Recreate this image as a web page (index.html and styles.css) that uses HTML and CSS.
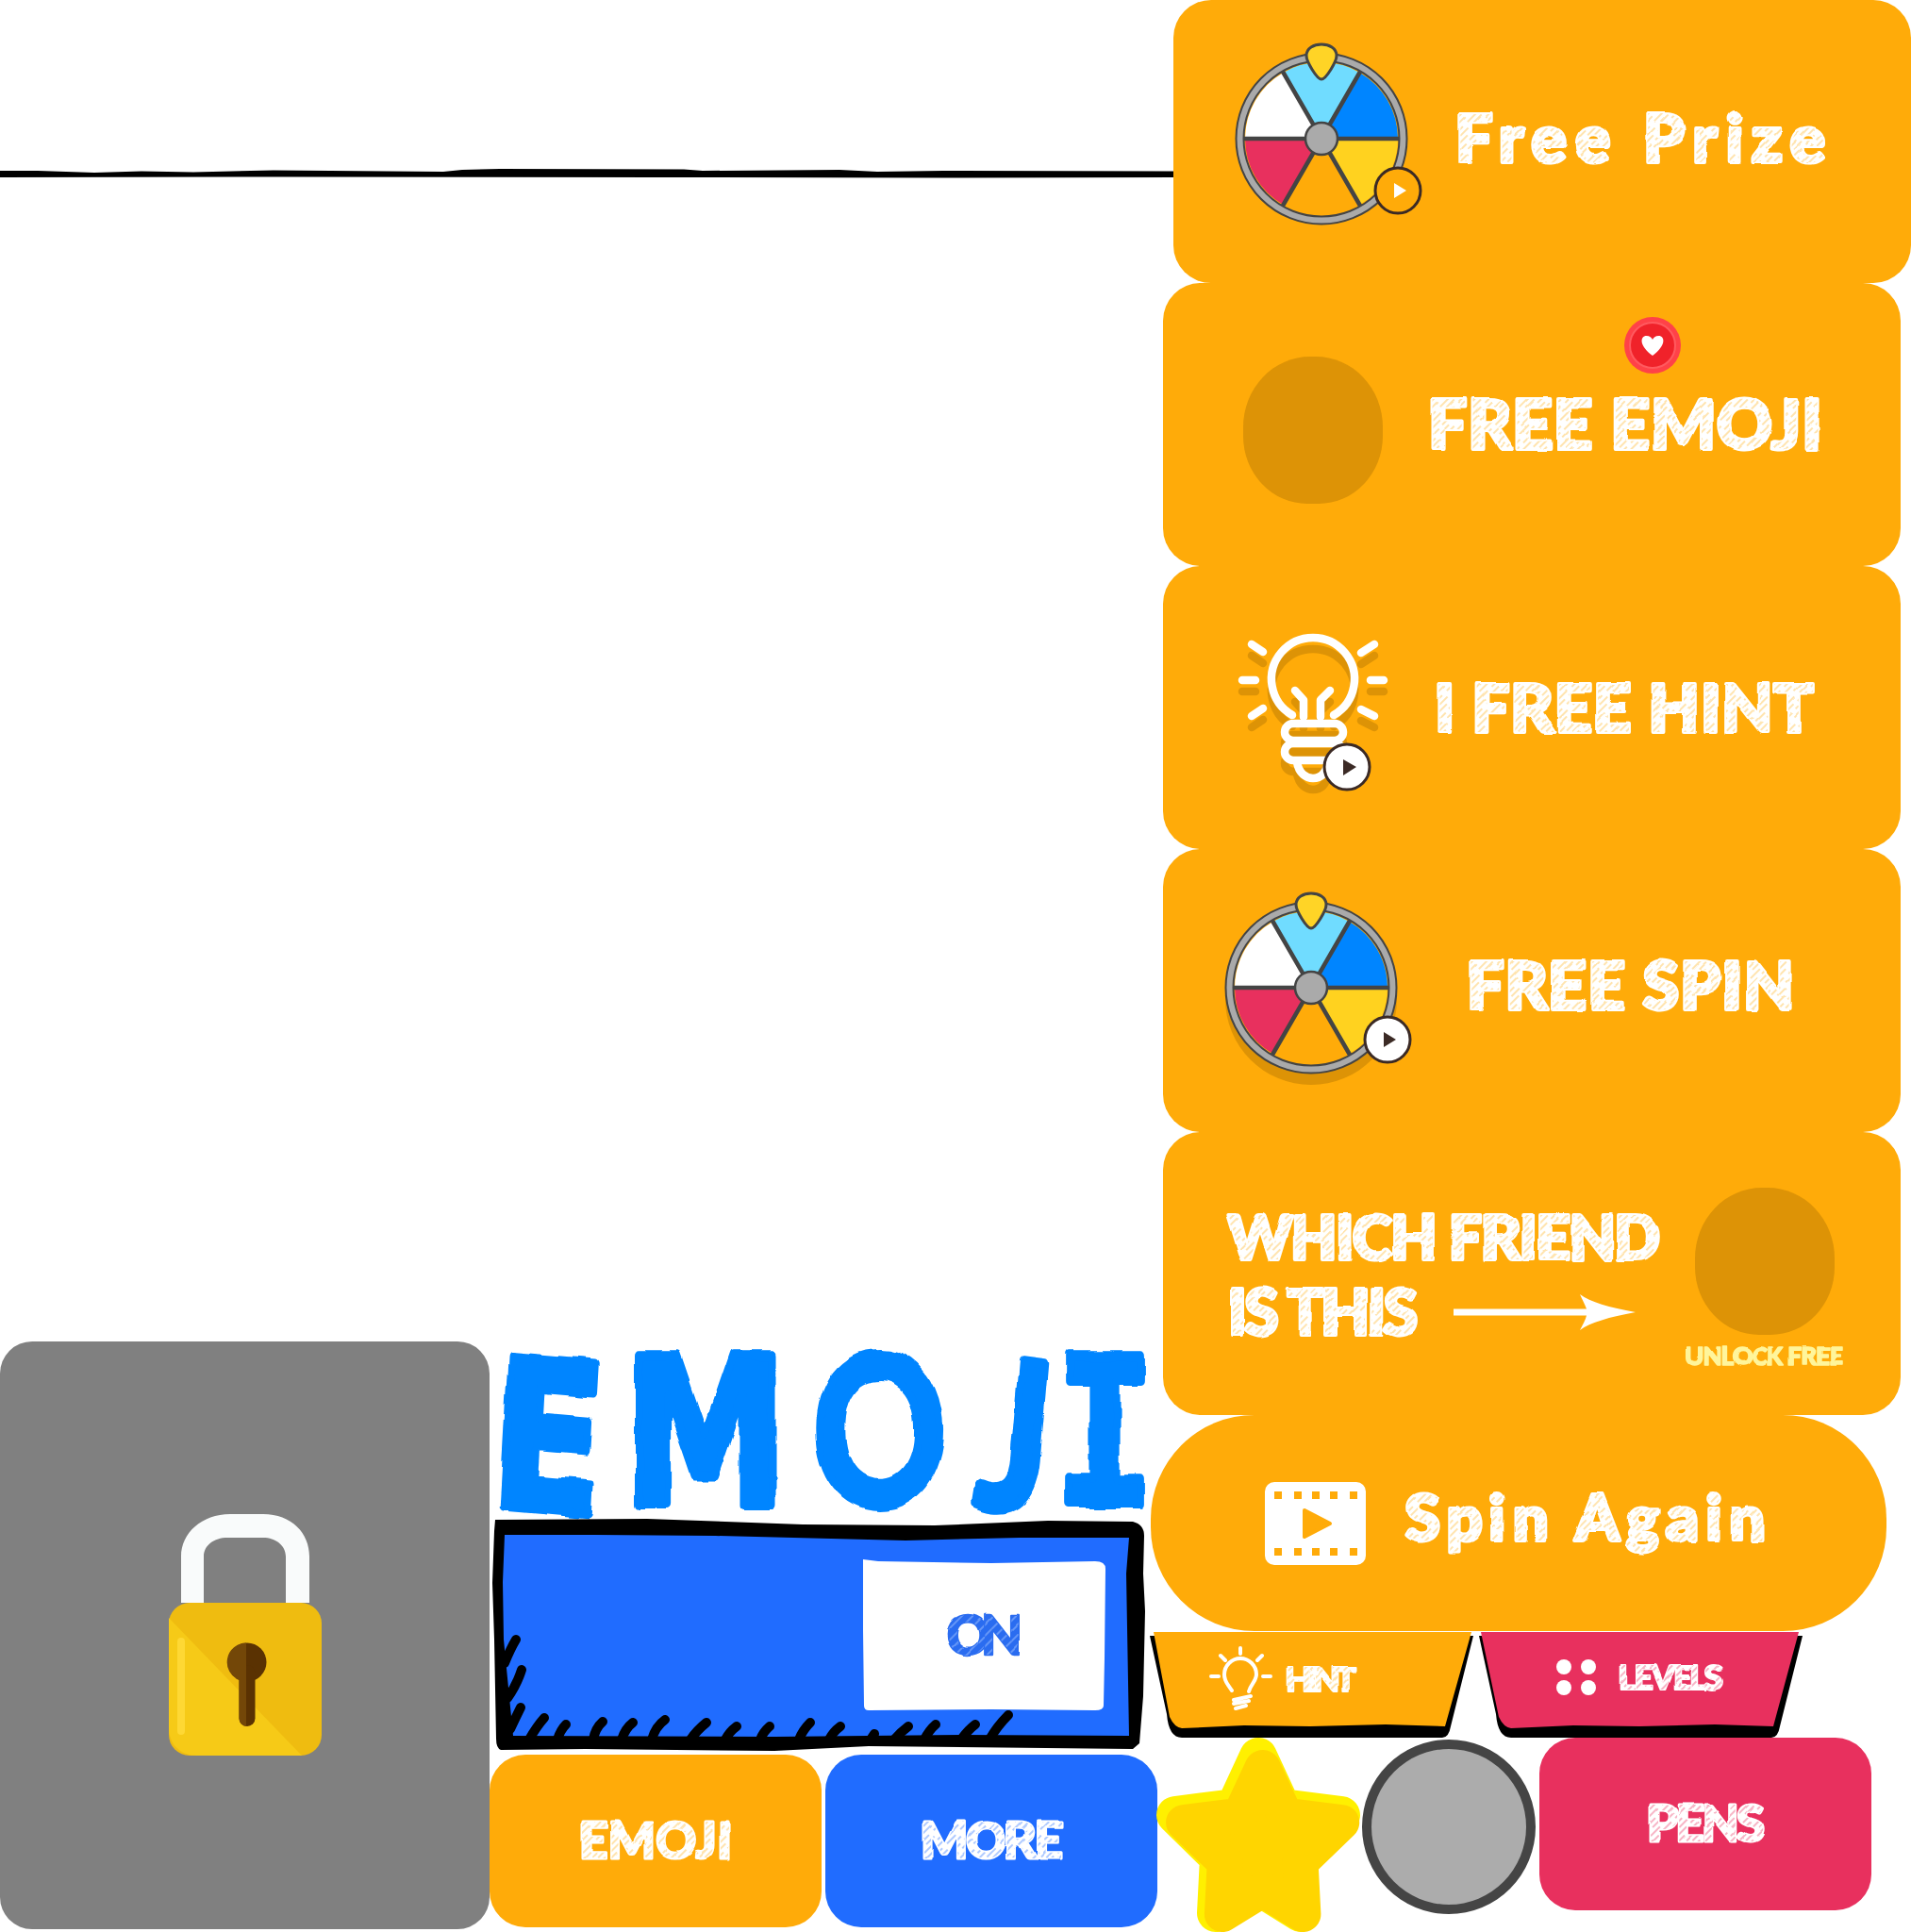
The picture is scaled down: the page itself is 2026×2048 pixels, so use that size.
FILE: index.html
```html
<!DOCTYPE html>
<html lang="en">
<head>
<meta charset="utf-8">
<title>Emoji game sprite sheet</title>
<link rel="stylesheet" href="styles.css">
</head>
<body>
<svg class="defs" width="0" height="0" aria-hidden="true">
  <defs>
    <filter id="wobble" x="-5%" y="-15%" width="110%" height="130%">
      <feTurbulence type="fractalNoise" baseFrequency=".035" numOctaves="2" seed="4"/>
      <feDisplacementMap in="SourceGraphic" scale="3.500" xChannelSelector="R" yChannelSelector="G"/>
    </filter>
    <filter id="wobble-big" x="-5%" y="-10%" width="110%" height="120%">
      <feTurbulence type="fractalNoise" baseFrequency=".022" numOctaves="2" seed="9"/>
      <feDisplacementMap in="SourceGraphic" scale="11" xChannelSelector="R" yChannelSelector="G"/>
    </filter>
    <pattern id="h-orange" width="20" height="20" patternUnits="userSpaceOnUse" patternTransform="rotate(45)">
      <rect width="20" height="20" fill="#fff"/>
      <path d="M2 0V12M7 6V20M12 0V8M12 14V20M17 3V16" stroke="#ffab09" stroke-opacity=".5" stroke-width="1.300"/>
    </pattern>
    <pattern id="h-blue" width="20" height="20" patternUnits="userSpaceOnUse" patternTransform="rotate(45)">
      <rect width="20" height="20" fill="#fff"/>
      <path d="M2 0V12M7 6V20M12 0V8M12 14V20M17 3V16" stroke="#206cff" stroke-opacity=".55" stroke-width="1.300"/>
    </pattern>
    <pattern id="h-red" width="20" height="20" patternUnits="userSpaceOnUse" patternTransform="rotate(45)">
      <rect width="20" height="20" fill="#fff"/>
      <path d="M2 0V12M7 6V20M12 0V8M12 14V20M17 3V16" stroke="#e8305e" stroke-opacity=".55" stroke-width="1.300"/>
    </pattern>
    <pattern id="h-on" width="8" height="8" patternUnits="userSpaceOnUse" patternTransform="rotate(45)">
      <rect width="8" height="8" fill="#2a6cf0"/>
      <path d="M3 0V8" stroke="#9fc0ff" stroke-width="1"/>
    </pattern>
    <symbol id="wheel" viewBox="-105 -105 210 210">
      <circle r="82" fill="#ffab09"/>
      <path d="M0 0L-40.500-70.100A81 81 0 0 1 40.500-70.100Z" fill="#70dcff"/>
      <path d="M0 0L40.500-70.100A81 81 0 0 1 81 0Z" fill="#0085ff"/>
      <path d="M0 0L81 0A81 81 0 0 1 40.500 70.100Z" fill="#ffd21f"/>
      <path d="M0 0L-40.500 70.100A81 81 0 0 1-81 0Z" fill="#e8305e"/>
      <path d="M0 0L-81 0A81 81 0 0 1-40.500-70.100Z" fill="#fff"/>
      <path d="M-82 0H82M-41-71L41 71M41-71L-41 71" stroke="#444" stroke-width="4.500"/>
      <circle r="86.500" fill="none" stroke="#444" stroke-width="10"/>
      <circle r="86.500" fill="none" stroke="#aaa" stroke-width="6"/>
      <circle r="17" fill="#aaa" stroke="#444" stroke-width="2.500"/>
      <path d="M0-63C-5-63-16-82-16-88C-16-96-8-100 0-100C8-100 16-96 16-88C16-82 5-63 0-63Z" fill="#ffd426" stroke="#444" stroke-width="3"/>
    </symbol>
    <polygon id="star-shape" points="107,20 132,74 195,82 149,127 152,186 107,158 62,186 65,127 19,82 82,74"/>
  </defs>
</svg>

<main class="atlas">
  <svg class="rule" width="1244" height="12" viewBox="0 0 1244 12">
    <path d="M0 3L40 3 100 5 150 3.500 205 4.500 290 2.500 470 4 490 2 530 1 725 1.500 745 3 890 2 930 4 1000 3 1244 3.500V10L1000 10.500 700 10 300 9.500 0 10Z"/>
  </svg>

  <section class="panel panel-prize">
    <svg class="wheel" width="210" height="210" viewBox="-105 -105 210 210">
      <use href="#wheel" x="-105" y="-105" width="210" height="210"/>
      <circle cx="81" cy="55" r="24" fill="#ffab09" stroke="#3b2a25" stroke-width="3"/>
      <path d="M77 47V63L90 55Z" fill="#fff"/>
    </svg>
    <svg class="label gap-prize" width="396" height="54"><text class="fs-70" x="2" y="52" textLength="392" filter="url(#wobble)" fill="url(#h-orange)">Free Prize</text></svg>
  </section>

  <section class="panel panel-emoji">
    <div class="blob blob-emoji"></div>
    <svg class="label gap-emoji" width="422" height="56"><text class="fs-73" x="2" y="54" textLength="418" filter="url(#wobble)" fill="url(#h-orange)">FREE EMOJI</text></svg>
    <svg class="heart" width="60" height="60" viewBox="-30 -30 60 60">
      <circle r="30" fill="#ff4248"/>
      <circle r="24" fill="#f0222a"/>
      <circle r="24" fill="none" stroke="#ff5a5f" stroke-width="2"/>
      <path d="M0 11C-15 0-13-10-6.500-10C-3-10-1-8 0-6C1-8 3-10 6.500-10C13-10 15 0 0 11Z" fill="#fff"/>
    </svg>
  </section>

  <section class="panel panel-hint">
    <svg class="bulb" width="200" height="200" viewBox="0 0 200 200">
      <g id="bulb-lines" class="bulb-strokes">
        <path d="M80 98A44 44 0 1 1 124 98"/>
        <path d="M83 72L92 82V100M120 72L110 82V100"/>
        <rect x="72" y="107" width="62" height="18" rx="9"/>
        <rect x="72" y="128" width="62" height="18" rx="9"/>
        <path d="M85 148C87 160 95 165 102 165C110 165 116 160 118 148"/>
        <path d="M37 23L49 31M27 61H41M37 99L49 91M153 32L167 23M163 61H177M153 92L167 99"/>
      </g>
      <use href="#bulb-lines" y="12" class="bulb-shadow"/>
      <use href="#bulb-lines" class="bulb-top"/>
      <circle cx="138" cy="153" r="24" fill="#fff" stroke="#3b2a25" stroke-width="3"/>
      <path d="M134 145V162L148 153Z" fill="#3b2a25"/>
    </svg>
    <svg class="label gap-hint" width="406" height="55"><text class="fs-71" x="2" y="53" textLength="402" filter="url(#wobble)" fill="url(#h-orange)">I FREE HINT</text></svg>
  </section>

  <section class="panel panel-spin">
    <svg class="wheel" width="210" height="210" viewBox="-105 -105 210 210">
      <circle cy="12" r="91" fill="#dd9306"/>
      <use href="#wheel" x="-105" y="-105" width="210" height="210"/>
      <circle cx="81" cy="55" r="24" fill="#fff" stroke="#3b2a25" stroke-width="3"/>
      <path d="M77 47V63L90 55Z" fill="#3b2a25"/>
    </svg>
    <svg class="label gap-spin" width="351" height="54"><text class="fs-70" x="2" y="52" textLength="347" filter="url(#wobble)" fill="url(#h-orange)">FREE SPIN</text></svg>
  </section>

  <section class="panel panel-friend">
    <div class="friend-copy">
      <svg class="label" width="462" height="50"><text class="fs-64" x="2" y="48" textLength="458" filter="url(#wobble)" fill="url(#h-orange)">WHICH FRIEND</text></svg>
      <div class="friend-row">
        <svg class="label" width="205" height="51"><text class="fs-66" x="2" y="49" textLength="201" filter="url(#wobble)" fill="url(#h-orange)">IS THIS</text></svg>
        <svg width="193" height="38" viewBox="0 0 193 38"><path fill="#fff" d="M0 15.500H141C139 10 136 5 134 0C145 8 165 14 193 19C165 24 145 30 134 38C137 32 140 27 141 22.500H0Z"/></svg>
      </div>
    </div>
    <div class="friend-unlock">
      <div class="blob"></div>
      <svg class="label label-unlock" width="169" height="20"><text class="fs-26" x="1" y="19" textLength="167" filter="url(#wobble)" fill="#fff59b">UNLOCK FREE</text></svg>
    </div>
  </section>

  <section class="panel-again">
    <svg width="107" height="88" viewBox="0 0 107 88">
      <rect width="107" height="88" rx="10" fill="#fff"/>
      <path d="M10 10h8v8h-8zM31 10h8v8h-8zM50 10h8v8h-8zM69 10h8v8h-8zM90 10h8v8h-8zM10 70h8v8h-8zM31 70h8v8h-8zM50 70h8v8h-8zM69 70h8v8h-8zM90 70h8v8h-8z" fill="#ffab09"/>
      <path d="M42 30L69 44 42 58Z" fill="#ffab09" stroke="#ffab09" stroke-width="4" stroke-linejoin="round"/>
    </svg>
    <svg class="label gap-again" width="385" height="52"><text class="fs-67" x="2" y="50" textLength="381" filter="url(#wobble)" fill="url(#h-orange)">Spin Again</text></svg>
  </section>

  <section class="tab tab-hint">
    <svg class="tab-shape" width="344" height="112" viewBox="0 0 344 112">
      <path d="M0 4L18 87Q20 112 34 112H310Q317 112 319 100L343 4Z" fill="#000"/>
      <path d="M4 0H341L313 100 250 98 170 100 100 99 34 102Q26 101 21 90Z" fill="#ffab09"/>
    </svg>
    <svg class="mini-bulb" width="64" height="70" viewBox="0 0 64 70">
      <path d="M23 47C18 40 15 36 15 30A17 17 0 0 1 49 30C49 37 43 40 41 48M25 57L43 53M25 61L41 58M27 66L38 63M32 2V8M11 10L16 15M55 10L50 15M1 32H9M56 32H64"/>
    </svg>
    <svg class="label label-sm" width="76" height="28"><text class="fs-36" x="1" y="27" textLength="74" filter="url(#wobble)" fill="url(#h-orange)">HINT</text></svg>
  </section>

  <section class="tab tab-levels">
    <svg class="tab-shape" width="344" height="112" viewBox="0 0 344 112">
      <path d="M0 4L18 87Q20 112 34 112H310Q317 112 319 100L343 4Z" fill="#000"/>
      <path d="M2 0H339L312 100 250 98 170 100 100 99 34 102Q26 101 21 90Z" fill="#e8305e"/>
    </svg>
    <svg width="42" height="38" viewBox="0 0 42 38">
      <circle cx="8" cy="8" r="8" fill="#fff"/>
      <circle cx="34" cy="8" r="8" fill="#fff"/>
      <circle cx="8" cy="30" r="8" fill="#fff"/>
      <circle cx="34" cy="30" r="8" fill="#fff"/>
    </svg>
    <svg class="label label-sm" width="113" height="28"><text class="fs-36" x="1" y="27" textLength="111" filter="url(#wobble)" fill="url(#h-red)">LEVELS</text></svg>
  </section>

  <section class="lock-card">
    <svg width="162" height="256" viewBox="0 0 162 256">
      <path d="M13 94V45C13 20 35 0 65 0H100C130 0 149 20 149 45V94H124V45C124 33 113 25 100 25H62C48 25 37 33 37 45V94Z" fill="#f9fbfb"/>
      <rect y="94" width="162" height="162" rx="22" fill="#efbc10"/>
      <path d="M0 110L141 256H30C12 256 0 244 0 226Z" fill="#f6ca17"/>
      <rect x="9" y="131" width="8" height="103" rx="4" fill="#fed834"/>
      <circle cx="83" cy="157" r="20.500" fill="#5a3202"/>
      <rect x="74.500" y="160" width="17" height="65" rx="8.500" fill="#5a3202"/>
      <path d="M82 136.500A20.500 20.500 0 0 0 74.500 176V216.500A8.500 8.500 0 0 0 82 225Z" fill="#734708"/>
    </svg>
  </section>

  <svg class="title" width="700" height="190" viewBox="0 0 700 190">
    <text class="title-text" y="170" x="-9 170 421 634 742" rotate="4 0 0 6 0" transform="scale(.8 1)" filter="url(#wobble-big)"><tspan class="title-wide">EM</tspan>OJ<tspan class="title-i">I</tspan></text>
  </svg>

  <svg class="toggle" width="696" height="252" viewBox="0 0 696 252">
    <path d="M4 3L165 2 330 8 470 9 590 4 680 5Q692 8 692 20L691 60 693 100 691 190 687 240 680 246 400 243 300 248 100 246 10 247Q5 245 5 235L3 130 1 70 3 15Z" fill="#000"/>
    <path d="M14 19L110 19 237 20 439 25 560 22 676 22 673 60 676 232 500 231 300 233 23 232 13 130 12 69Z" fill="#206cff"/>
    <path d="M394 45L410 47 530 49 640 47Q651 47 651 55L650 150 649 200Q649 205 640 205L530 204 400 205Q395 205 395 200L394 120Z" fill="#fff"/>
    <path class="toggle-hatch" d="M40 236Q48 222 56 213M70 236Q73 226 79 220M108 236Q110 224 118 217M138 236Q142 224 150 218M170 236Q174 222 184 215M211 236Q218 226 228 218M248 236Q252 228 260 222M285 236Q288 228 295 222M326 236Q330 226 338 218M358 236Q362 228 370 222M402 236L406 230M427 236Q434 228 442 222M459 236Q464 226 471 220M498 236Q505 226 513 220M528 236Q536 222 548 210"/>
    <path class="toggle-hatch" d="M14 155Q20 140 26 130M17 192Q27 178 32 162M20 225Q26 212 31 202"/>
    <text class="fs-57 on" x="482" y="146" textLength="81" filter="url(#wobble)" fill="url(#h-on)">ON</text>
  </svg>

  <button class="btn btn-emoji"><svg class="label label-md" width="164" height="41"><text class="fs-53" x="1" y="39" textLength="162" filter="url(#wobble)" fill="url(#h-orange)">EMOJI</text></svg></button>
  <button class="btn btn-more"><svg class="label label-md" width="153" height="41"><text class="fs-53" x="1" y="39" textLength="151" filter="url(#wobble)" fill="url(#h-blue)">MORE</text></svg></button>

  <svg class="star" width="215" height="206" viewBox="0 0 215 206">
    <use href="#star-shape" class="star-back"/>
    <use href="#star-shape" class="star-front" transform="translate(10 13) scale(.95 .937)"/>
  </svg>

  <div class="dial"></div>

  <button class="btn btn-pens"><svg class="label label-md" width="127" height="41"><text class="fs-53" x="1" y="39" textLength="125" filter="url(#wobble)" fill="url(#h-red)">PENS</text></svg></button>
</main>
</body>
</html>
```
FILE: styles.css
```css
* { box-sizing: border-box; }
html, body { margin: 0; padding: 0; background: #fff; }
.defs { position: absolute; }

/* The page is a sprite atlas: each sprite's place on the canvas is its content. */
.atlas {
  position: relative;
  width: 2026px;
  height: 2048px;
  overflow: hidden;
  font-family: "Lato", "Open Sans", sans-serif;
  font-weight: 900;
}

svg { display: block; flex: none; overflow: visible; }

.label text {
  stroke: #fff;
  stroke-width: 4;
  stroke-linejoin: round;
  paint-order: stroke;
}
.label-md text { stroke-width: 3; }
.label-sm text { stroke-width: 2; }
.label-unlock text { stroke: #fff59b; stroke-width: 1.5; }

.fs-73 { font-size: 73px; }
.fs-71 { font-size: 71px; }
.fs-70 { font-size: 70px; }
.fs-67 { font-size: 67px; }
.fs-66 { font-size: 66px; }
.fs-64 { font-size: 64px; }
.fs-57 { font-size: 57px; }
.fs-53 { font-size: 53px; }
.fs-36 { font-size: 36px; }
.fs-26 { font-size: 26px; }

.rule { position: absolute; left: 0; top: 178px; }

/* Orange cards */
.panel {
  position: absolute;
  display: flex;
  align-items: center;
  width: 782px;
  height: 300px;
  background: #ffab09;
  border-radius: 40px;
}
.panel-prize { left: 1244px; top: 0; padding: 0 0 6px 52px; }
.panel-emoji { left: 1233px; top: 300px; padding-left: 85px; }
.panel-hint { left: 1233px; top: 600px; padding-left: 57px; }
.panel-spin { left: 1233px; top: 900px; padding-left: 52px; }
.panel-friend { left: 1233px; top: 1200px; padding-left: 67px; }

.gap-prize { margin-left: 35px; }
.gap-emoji { margin-left: 46px; }
.gap-hint { margin-left: 29px; }
.gap-spin { margin: 0 0 10px 58px; }
.gap-again { margin: 0 0 12px 40px; }

.panel-emoji .blob { margin-top: 12px; }
.bulb { margin-top: 20px; }
.panel-spin .wheel { margin-bottom: 6px; }

.blob {
  width: 148px;
  height: 156px;
  background: #dd9306;
  border-radius: 48% 48% 46% 46%;
}
.heart { position: absolute; left: 489px; top: 36px; }

.bulb-strokes { fill: none; stroke-width: 8.5; stroke-linecap: round; stroke-linejoin: round; stroke: inherit; }
.bulb-shadow { stroke: #dd9306; }
.bulb-top { stroke: #fff; }

.friend-copy { display: flex; flex-direction: column; gap: 29px; width: 486px; margin-top: 3px; }
.friend-row { display: flex; align-items: center; gap: 36px; }
.friend-unlock {
  display: flex;
  flex-direction: column;
  align-items: center;
  gap: 13px;
  width: 169px;
  margin-top: 7px;
}

.panel-again {
  position: absolute;
  left: 1220px;
  top: 1500px;
  width: 780px;
  height: 229px;
  display: flex;
  align-items: center;
  padding-left: 121px;
  background: #ffab09;
  border-radius: 110px;
}

/* Tabs */
.tab {
  position: absolute;
  top: 1730px;
  width: 344px;
  height: 112px;
  display: flex;
  align-items: center;
}
.tab > svg { position: relative; }
.tab > .tab-shape { position: absolute; left: 0; top: 0; }
.tab-hint { left: 1219px; padding: 0 0 12px 64px; gap: 15px; }
.tab-levels { left: 1568px; padding: 0 0 16px 82px; gap: 23px; }
.mini-bulb path { fill: none; stroke: #fff; stroke-width: 4; stroke-linecap: round; stroke-linejoin: round; }

/* Lock */
.lock-card {
  position: absolute;
  left: 0;
  top: 1422px;
  width: 519px;
  height: 623px;
  display: flex;
  align-items: center;
  justify-content: center;
  padding-bottom: 2px;
  background: #808080;
  border-radius: 34px;
}

/* Title */
.title { position: absolute; left: 525px; top: 1425px; }
.title-text {
  font-family: "Lato", sans-serif;
  font-weight: 700;
  font-size: 218px;
  fill: #0085ff;
  stroke: #0085ff;
  stroke-width: 10;
  stroke-linejoin: round;
}
.title-wide { font-family: "DejaVu Sans", sans-serif; }
.title-i { font-family: "DejaVu Sans Mono", monospace; }

/* Toggle */
.toggle { position: absolute; left: 521px; top: 1608px; }
.toggle-hatch { fill: none; stroke: #000; stroke-width: 10; stroke-linecap: round; }
.on { stroke: #2a6cf0; stroke-width: 2.5; stroke-linejoin: round; paint-order: stroke; }

/* Buttons */
.btn {
  position: absolute;
  display: flex;
  align-items: center;
  justify-content: center;
  padding: 0;
  border: 0;
  border-radius: 38px;
  font: inherit;
}
.btn-emoji { left: 519px; top: 1860px; width: 352px; height: 183px; background: #ffab09; }
.btn-more { left: 875px; top: 1860px; width: 352px; height: 183px; background: #206cff; }
.btn-pens { left: 1632px; top: 1842px; width: 352px; height: 183px; background: #e8305e; }

/* Star and dial */
.star { position: absolute; left: 1227px; top: 1842px; }
.star use { stroke-width: 40; stroke-linejoin: round; }
.star-back { fill: #fff000; stroke: #fff000; }
.star-front { fill: #ffd500; stroke: #ffd500; }
.dial {
  position: absolute;
  left: 1444px;
  top: 1844px;
  width: 184px;
  height: 185px;
  background: #acacac;
  border: 10px solid #454545;
  border-radius: 50%;
}
```
